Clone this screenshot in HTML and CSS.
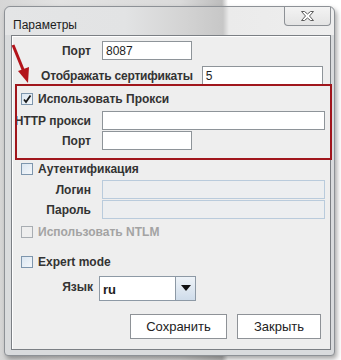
FILE: index.html
```html
<!DOCTYPE html>
<html>
<head>
<meta charset="utf-8">
<link rel="stylesheet" href="styles.css">
</head>
<body>
<div class="window">
  <div class="titlebar">
    <span class="title">Параметры</span>
    <div class="close">
      <svg width="13" height="10" viewBox="0 0 13 10"><polygon points="0.5,0.5 3.5,0.5 6.5,3 9.5,0.5 12.5,0.5 8.5,5 12.5,9.5 9.5,9.5 6.5,7 3.5,9.5 0.5,9.5 4.5,5" fill="#fff" stroke="#5c5c5c" stroke-width="1" stroke-linejoin="round"/></svg>
    </div>
  </div>
  <div class="content">
    <div class="row r1">
      <span class="lbl col">Порт</span>
      <div class="field short">8087</div>
    </div>
    <div class="row r2">
      <span class="lbl cert">Отображать сертификаты</span>
      <div class="field cert-f">5</div>
    </div>
    <div class="row chk-row r3">
      <span class="box checked"><svg width="10" height="10" viewBox="0 0 10 10"><path d="M2 5.5 L4 8 L8.5 1.5" fill="none" stroke="#1a1a1a" stroke-width="1.8"/></svg></span>
      <span class="lbl">Использовать Прокси</span>
    </div>
    <div class="row r4">
      <span class="lbl col">HTTP прокси</span>
      <div class="field long"></div>
    </div>
    <div class="row r5">
      <span class="lbl col">Порт</span>
      <div class="field short"></div>
    </div>
    <div class="row chk-row r6">
      <span class="box"></span>
      <span class="lbl">Аутентификация</span>
    </div>
    <div class="row r7">
      <span class="lbl col">Логин</span>
      <div class="field long disabled"></div>
    </div>
    <div class="row r8">
      <span class="lbl col">Пароль</span>
      <div class="field long disabled"></div>
    </div>
    <div class="row chk-row r9">
      <span class="box off"></span>
      <span class="lbl dim">Использовать NTLM</span>
    </div>
    <div class="row chk-row r10">
      <span class="box"></span>
      <span class="lbl">Expert mode</span>
    </div>
    <div class="row r11">
      <span class="lbl col lang">Язык</span>
      <div class="combo">
        <div class="combo-val">ru</div>
        <div class="combo-btn"><svg width="10" height="6" viewBox="0 0 10 6"><polygon points="0,0 10,0 5,6" fill="#111"/></svg></div>
      </div>
    </div>
    <div class="row buttons">
      <div class="btn save">Сохранить</div>
      <div class="btn closeb">Закрыть</div>
    </div>
  </div>
</div>
<div class="redbox"></div>
<svg class="arrow" width="40" height="90" viewBox="0 0 40 90">
  <line x1="13" y1="45" x2="24" y2="72" stroke="#b3141b" stroke-width="3"/>
  <polygon points="18,71 29,67 28,83" fill="#b3141b"/>
</svg>
</body>
</html>
```
FILE: styles.css
```css
html, body {
  margin: 0;
  padding: 0;
}
body {
  width: 341px;
  height: 360px;
  overflow: hidden;
  position: relative;
  background: linear-gradient(to right, #d6d6d6 0, #e2e2e2 60px, #dadada 180px, #bdbdbd 222px, #ffffff 228px, #ffffff 100%);
  font-family: "Liberation Sans", Arial, sans-serif;
}
.window {
  margin: 6px 0 0 4px;
  border: 1px solid #8d9196;
  border-radius: 6px 6px 4px 4px;
  background: #d9dbdd;
  padding: 0 3px 5px 6px;
  box-sizing: content-box;
  width: 320px;
  height: 343px;
  box-shadow: 2px 3px 5px rgba(0,0,0,0.35);
  display: flex;
  flex-direction: column;
  position: relative;
}
.titlebar {
  height: 28px;
  margin: 0 -3px 0 -6px;
  padding: 0 2px 0 8px;
  display: flex;
  justify-content: space-between;
  align-items: flex-start;
  border-radius: 6px 6px 0 0;
  background: linear-gradient(to right, #e4e5e6 0, #e2e3e4 120px, #d3d3d3 180px, #c7c7c7 218px, #ebebeb 224px, #eeeeee 100%);
}
.title {
  font-size: 12px;
  color: #1c1c1c;
  margin-top: 11px;
  font-family: "Liberation Sans", Arial, sans-serif;
}
.close {
  width: 45px;
  height: 18px;
  border: 1px solid #8d9196;
  border-top: none;
  border-radius: 0 0 4px 4px;
  background: linear-gradient(#f3f3f3, #e4e4e4);
  display: flex;
  align-items: center;
  justify-content: center;
  margin-right: 1px;
}
.content {
  width: 318px;
  height: 313px;
  border: 1px solid #7b7f84;
  box-shadow: inset 1px 1px 0 #ffffff;
  background: #eeeeee;
  display: flex;
  flex-direction: column;
}
.row {
  display: flex;
  align-items: center;
  height: 19px;
  flex: none;
}
.lbl {
  font-size: 12px;
  font-weight: bold;
  color: #333333;
  white-space: nowrap;
}
.lbl.dim {
  color: #a3a3a3;
}
.col {
  width: 79px;
  text-align: right;
  margin-right: 11px;
}
.field {
  height: 19px;
  box-sizing: border-box;
  border: 1px solid #8e9499;
  background: #ffffff;
  font-size: 12px;
  color: #1e1e1e;
  padding: 2px 0 0 3px;
}
.field.short { width: 90px; }
.field.long { width: 223px; }
.field.cert-f { width: 121px; }
.field.disabled {
  background: #eceef0;
  border-color: #b9cbdc;
}
.cert {
  margin-left: 29px;
  margin-right: 9px;
  letter-spacing: -0.2px;
}
.r1 { margin-top: 5px; }
.r2 { margin-top: 6px; }
.r3 { margin-top: 7px; height: 14px; }
.r4 { margin-top: 5px; }
.r5 { margin-top: 1px; }
.r6 { margin-top: 12px; height: 14px; }
.r7 { margin-top: 4px; }
.r8 { margin-top: 1px; }
.r9 { margin-top: 6px; height: 14px; }
.r10 { margin-top: 16px; height: 14px; }
.r11 { margin-top: 7px; height: 24px; }
.chk-row {
  padding-left: 9px;
}
.box {
  width: 12px;
  height: 12px;
  box-sizing: border-box;
  border: 1px solid #7e96ad;
  background: linear-gradient(135deg, #dbe6f1 0, #f4f7fa 100%);
  margin-right: 5px;
  display: flex;
  align-items: center;
  justify-content: center;
}
.box.off {
  border-color: #a8adb2;
  background: #eeeeee;
}
.lang {
  width: 81px;
  margin-right: 6px;
  align-self: flex-start;
  margin-top: 4px;
}
.combo {
  width: 97px;
  height: 25px;
  box-sizing: border-box;
  border: 1px solid #8d99a5;
  display: flex;
  background: #ffffff;
}
.combo-val {
  flex: 1;
  font-size: 13px;
  font-weight: bold;
  color: #1e1e1e;
  padding: 5px 0 0 3px;
  border-right: 1px solid #8d99a5;
}
.combo-btn {
  width: 19px;
  background: linear-gradient(#eef3f8, #cfdcea);
  display: flex;
  align-items: center;
  justify-content: center;
}
.buttons {
  margin-top: 14px;
  height: 25px;
  justify-content: flex-end;
  padding-right: 9px;
  gap: 10px;
}
.btn {
  height: 25px;
  box-sizing: border-box;
  border: 1px solid #8e9297;
  background: #ffffff;
  font-size: 13px;
  color: #222222;
  display: flex;
  align-items: center;
  justify-content: center;
}
.btn.save { width: 97px; }
.btn.closeb { width: 84px; }
.redbox {
  position: absolute;
  left: 15px;
  top: 84px;
  width: 317px;
  height: 76px;
  box-sizing: border-box;
  border: 2px solid #a0161c;
}
.arrow {
  position: absolute;
  left: 0;
  top: 0;
}
```
